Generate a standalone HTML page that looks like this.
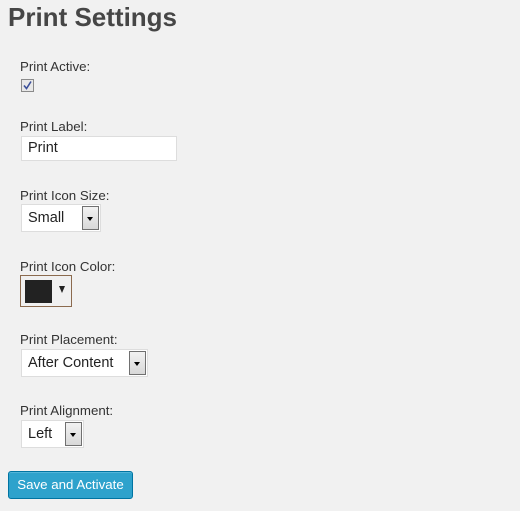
<!DOCTYPE html>
<html><head><style>
body{margin:0;width:520px;height:511px;background:#f1f1f1;font-family:"Liberation Sans",sans-serif;position:relative;overflow:hidden;color:#333}
.a{position:absolute}
h1{position:absolute;left:8px;top:2px;margin:0;font-size:26px;font-weight:bold;color:#464646}
.l{position:absolute;left:20px;font-size:13.3px;color:#333}
.box{position:absolute;background:#fff;border:1px solid #ddd;box-sizing:border-box;font-size:14.5px;color:#222}
.box span{position:absolute;left:6px;top:3px}
.arr{position:absolute;top:1px;bottom:1px;right:1px;width:17px;border:1px solid #707070;box-sizing:border-box;background:linear-gradient(#f2f2f2,#d8d8d8)}
.arr:after{content:"";position:absolute;left:4px;top:10px;border-left:3.5px solid transparent;border-right:3.5px solid transparent;border-top:4px solid #000}
</style></head><body>
<h1>Print Settings</h1>
<div class="l" style="top:59px">Print Active:</div>
<div class="a" style="left:21px;top:79px;width:13px;height:13px;border:1px solid #8a8a8a;box-sizing:border-box;background:#e8e8e8">
<svg width="11" height="11" style="position:absolute;left:0;top:0"><path d="M2 5.5L4.5 8.5L9 1.5" stroke="#3b4f9a" stroke-width="1.6" fill="none"/></svg></div>
<div class="l" style="top:119px">Print Label:</div>
<div class="box" style="left:21px;top:136px;width:156px;height:25px"><span>Print</span></div>
<div class="l" style="top:188px">Print Icon Size:</div>
<div class="box" style="left:21px;top:204px;width:80px;height:28px"><span style="top:5px">Small</span><div class="arr"></div></div>
<div class="l" style="top:259px">Print Icon Color:</div>
<div class="a" style="left:20px;top:275px;width:52px;height:32px;border:1px solid #8b6a4e;box-sizing:border-box;background:#f0f0f0">
<div class="a" style="left:4px;top:4px;width:27px;height:23px;background:#222"></div>
<div class="a" style="left:38px;top:10px;border-left:3.5px solid transparent;border-right:3.5px solid transparent;border-top:7px solid #222"></div></div>
<div class="l" style="top:332px">Print Placement:</div>
<div class="box" style="left:21px;top:349px;width:127px;height:28px"><span style="top:5px">After Content</span><div class="arr"></div></div>
<div class="l" style="top:403px">Print Alignment:</div>
<div class="box" style="left:21px;top:420px;width:63px;height:28px"><span style="top:5px">Left</span><div class="arr"></div></div>
<div class="a" style="left:8px;top:471px;width:125px;height:28px;background:#2ea2cc;border:1px solid #0074a2;box-sizing:border-box;border-radius:3px;color:#fff;font-size:13.3px;text-align:center;line-height:26px;box-shadow:inset 0 1px 0 rgba(120,200,230,.5)">Save and Activate</div>
</body></html>
